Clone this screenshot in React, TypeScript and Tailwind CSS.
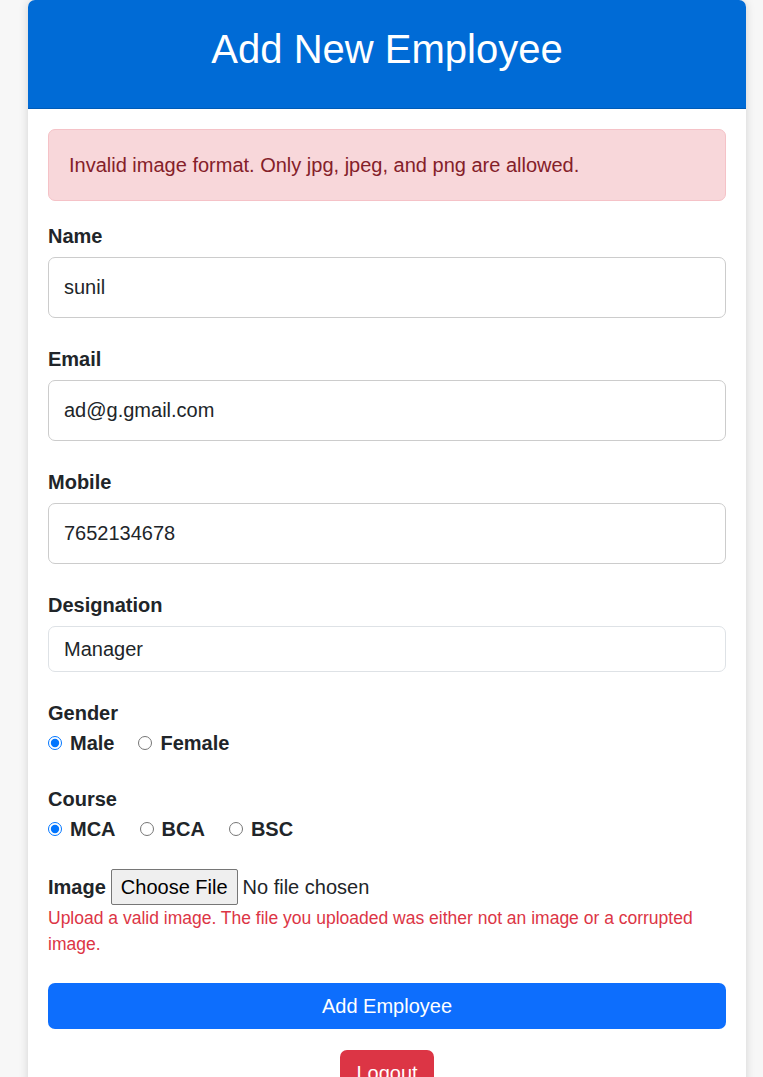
import { useState } from "react";

const inputBase =
  "block w-full rounded-[7px] border bg-white px-[15px] text-[20px] text-[#212529] outline-none";

function Field({ label, value, compact }: { label: string; value: string; compact?: boolean }) {
  const [val, setVal] = useState(value);
  return (
    <div className="mb-[26px]">
      <label className="mb-[6px] block text-[20px] font-bold leading-[30px]">{label}</label>
      <input
        type="text"
        value={val}
        onChange={(e) => setVal(e.target.value)}
        className={
          compact
            ? `${inputBase} border-[#dee2e6] py-[7px] leading-[30px]`
            : `${inputBase} border-[#cccccc] py-[14px] leading-[31px]`
        }
      />
    </div>
  );
}

function Radio({ name, label, checked }: { name: string; label: string; checked?: boolean }) {
  return (
    <label className="mr-[24px] inline-flex items-center text-[20px] font-bold leading-[30px]">
      <input type="radio" name={name} defaultChecked={checked} className="m-0 h-[14px] w-[14px]" />
      <span className="ml-[8px]">{label}</span>
    </label>
  );
}

export default function App() {
  return (
    <div className="min-h-screen bg-[#f7f7f7] font-['Liberation_Sans',Arial,sans-serif] text-[#212529]">
      <div className="ml-[28px] w-[718px] rounded-t-[7px] bg-white shadow-[0_0_10px_rgba(0,0,0,0.15)]">
        {/* Header */}
        <div className="rounded-t-[7px] border-b border-black/15 bg-[#006bd6] pt-[25px] pb-[35px] text-center">
          <h1 className="text-[40px] font-normal leading-[48px] text-white">Add New Employee</h1>
        </div>

        <div className="px-[20px] pt-[20px] pb-[40px]">
          <div className="mb-[20px] rounded-[7px] border border-[#f5c2c7] bg-[#f8d7da] px-[20px] py-[20px] text-[20px] leading-[30px] text-[#842029]">
            Invalid image format. Only jpg, jpeg, and png are allowed.
          </div>

          <form onSubmit={(e) => e.preventDefault()}>
            <Field label="Name" value="sunil" />
            <Field label="Email" value="ad@g.gmail.com" />
            <Field label="Mobile" value="7652134678" />
            <Field label="Designation" value="Manager" compact />

            <div className="mb-[26px]">
              <div className="text-[20px] font-bold leading-[30px]">Gender</div>
              <div className="flex">
                <Radio name="gender" label="Male" checked />
                <Radio name="gender" label="Female" />
              </div>
            </div>

            <div className="mb-[25px]">
              <div className="text-[20px] font-bold leading-[30px]">Course</div>
              <div className="flex">
                <Radio name="course" label="MCA" checked />
                <Radio name="course" label="BCA" />
                <Radio name="course" label="BSC" />
              </div>
            </div>

            <div className="mb-[26px]">
              <div className="flex h-[36px] items-center text-[20px]">
                <span className="mr-[5px] font-bold">Image</span>
                <input
                  type="file"
                  className="text-[20px] leading-[26px] file:mr-[5px] file:h-[36px] file:rounded-[2px] file:border file:border-solid file:border-[#767676] file:bg-[#efefef] file:px-[9px] file:text-[20px] file:text-[#000000]"
                />
              </div>
              <p className="text-[17.5px] leading-[26px] text-[#dc3545]">
                Upload a valid image. The file you uploaded was either not an image or a corrupted image.
              </p>
            </div>

            <button
              type="submit"
              className="block h-[46px] w-full rounded-[7px] bg-[#0d6efd] text-[20px] text-white"
            >
              Add Employee
            </button>
          </form>

          <div className="mt-[21px] flex justify-center">
            <button className="h-[46px] rounded-[7px] bg-[#dc3545] px-[16px] text-[20px] text-white">Logout</button>
          </div>
        </div>
      </div>
    </div>
  );
}
